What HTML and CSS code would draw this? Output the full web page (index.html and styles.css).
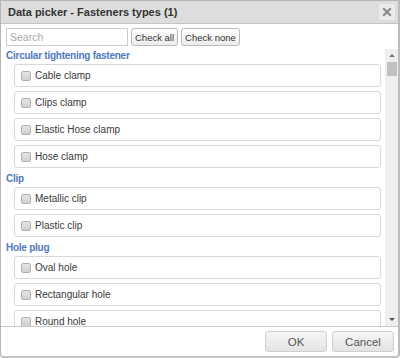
FILE: index.html
```html
<!DOCTYPE html>
<html>
<head>
<meta charset="utf-8">
<link rel="stylesheet" href="styles.css">
</head>
<body>
<div class="dialog">
  <div class="titlebar">
    <span class="title">Data picker - Fasteners types (1)</span>
    <span class="close"><svg width="10" height="10" viewBox="0 0 10 10"><path d="M2 2 L8 8 M8 2 L2 8" stroke="#8a8a8a" stroke-width="2.2" stroke-linecap="square"/></svg></span>
  </div>
  <div class="toolbar">
    <input class="search" type="text" placeholder="Search">
    <button class="btn">Check all</button>
    <button class="btn">Check none</button>
  </div>
  <div class="listwrap">
    <div class="list">
      <div class="group">Circular tightening fastener</div>
      <label class="item"><span class="cb"></span>Cable clamp</label>
      <label class="item"><span class="cb"></span>Clips clamp</label>
      <label class="item"><span class="cb"></span>Elastic Hose clamp</label>
      <label class="item"><span class="cb"></span>Hose clamp</label>
      <div class="group">Clip</div>
      <label class="item"><span class="cb"></span>Metallic clip</label>
      <label class="item"><span class="cb"></span>Plastic clip</label>
      <div class="group">Hole plug</div>
      <label class="item"><span class="cb"></span>Oval hole</label>
      <label class="item"><span class="cb"></span>Rectangular hole</label>
      <label class="item"><span class="cb"></span>Round hole</label>
    </div>
    <div class="scrollbar">
      <span class="arrow up"></span>
      <span class="thumb"></span>
      <span class="track"></span>
      <span class="arrow down"></span>
    </div>
  </div>
  <div class="footer">
    <button class="fbtn">OK</button>
    <button class="fbtn">Cancel</button>
  </div>
</div>
</body>
</html>
```
FILE: styles.css
```css
html, body {
  margin: 0;
  padding: 0;
  background: #ffffff;
}
body {
  font-family: "Liberation Sans", Arial, sans-serif;
  font-size: 10px;
  color: #333;
}
.dialog {
  box-sizing: border-box;
  width: 400px;
  height: 358px;
  border: 1px solid #b5b5b5;
  border-right: 2px solid #bcbcbc;
  border-bottom: 2px solid #c4c4c4;
  border-radius: 0 0 4px 4px;
  display: flex;
  flex-direction: column;
  background: #fff;
}
.titlebar {
  height: 22px;
  flex: none;
  background: #dddddd;
  border-bottom: 1px solid #c4c4c4;
  display: flex;
  align-items: center;
  justify-content: space-between;
  padding: 0 3px 0 7px;
}
.title {
  font-weight: bold;
  font-size: 11px;
  letter-spacing: 0;
  color: #333;
}
.close {
  width: 16px;
  height: 16px;
  border-radius: 3px;
  background: #ebebeb;
  display: flex;
  align-items: center;
  justify-content: center;
}
.toolbar {
  display: flex;
  align-items: center;
  gap: 3px;
  padding: 4px 5px 0 5px;
  height: 18px;
}
.search {
  box-sizing: border-box;
  width: 122px;
  height: 18px;
  border: 1px solid #c8ccd4;
  padding: 0 3px;
  font-family: inherit;
  font-size: 10.5px;
  margin: 0;
}
.search::placeholder { color: #aaa; }
.btn {
  box-sizing: border-box;
  height: 18px;
  padding: 0 3px;
  margin: 0;
  font-family: inherit;
  font-size: 9.5px;
  color: #333;
  background: linear-gradient(#ffffff, #ececec);
  border: 1px solid #bbb;
  border-radius: 3px;
}
.listwrap {
  display: flex;
  height: 277px;
  margin-top: 3px;
}
.list {
  flex: 1;
  overflow: hidden;
  padding: 0 4px 0 5px;
}
.group {
  font-weight: bold;
  color: #4f78c0;
  font-size: 10px;
  letter-spacing: -0.25px;
  height: 15px;
  line-height: 14px;
}
.item {
  box-sizing: border-box;
  display: flex;
  align-items: center;
  height: 23px;
  margin: 0 0 4px 8px;
  border: 1px solid #d8d8d8;
  border-radius: 3px;
  padding-left: 6px;
  color: #3a3a3a;
  font-size: 10px;
}
.cb {
  box-sizing: border-box;
  width: 10px;
  height: 10px;
  border: 1px solid #b0b0b0;
  border-radius: 2px;
  background: linear-gradient(#e4e4e4, #d0d0d0);
  margin-right: 4px;
}
.scrollbar {
  width: 13px;
  flex: none;
  background: #efefef;
  display: flex;
  flex-direction: column;
  align-items: center;
}
.arrow {
  height: 13px;
  width: 13px;
  position: relative;
  flex: none;
}
.arrow::after {
  content: "";
  position: absolute;
  left: 4px;
  width: 0;
  height: 0;
  border-left: 3px solid transparent;
  border-right: 3px solid transparent;
}
.arrow.up::after { top: 5px; border-bottom: 3px solid #777; }
.arrow.down::after { top: 5px; border-top: 3px solid #555; }
.thumb {
  width: 10px;
  height: 14px;
  background: #c1c1c1;
  flex: none;
}
.track { flex: 1; }
.footer {
  flex: 1;
  border-top: 1px solid #c9c9c9;
  display: flex;
  justify-content: flex-end;
  align-items: center;
  gap: 5px;
  padding-right: 4px;
}
.fbtn {
  box-sizing: border-box;
  width: 62px;
  height: 21px;
  margin: 0;
  font-family: inherit;
  font-size: 11.5px;
  color: #555;
  background: linear-gradient(#f6f6f6, #e3e3e3);
  border: 1px solid #cfcfcf;
  border-radius: 3px;
}
```
